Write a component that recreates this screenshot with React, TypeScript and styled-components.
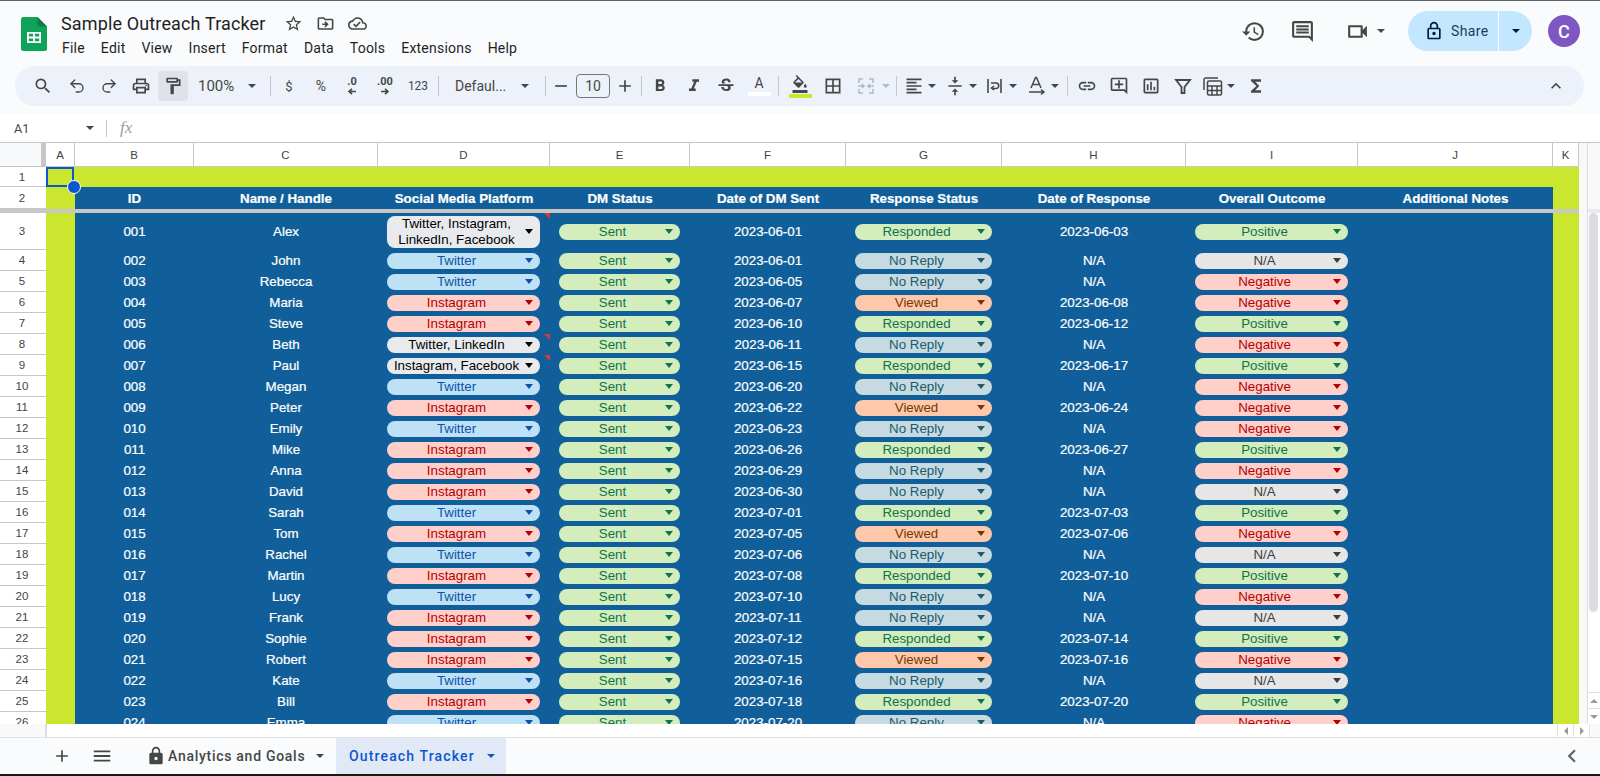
import React from "react";
import styled, { createGlobalStyle } from "styled-components";
import {
  MdSearch, MdOutlinePrint, MdOutlineFormatPaint, MdAdd, MdRemove, MdFormatBold, MdFormatItalic,
  MdStrikethroughS, MdFormatColorFill, MdBorderAll, MdFormatAlignLeft, MdVerticalAlignCenter, MdLink,
  MdOutlineAddComment, MdOutlineInsertChart, MdFunctions, MdExpandLess, MdHistory, MdOutlineComment,
  MdOutlineVideocam, MdOutlineLock, MdStarBorder, MdOutlineDriveFileMove, MdOutlineCloudDone, MdLock, MdMenu,
  MdChevronLeft,
} from "react-icons/md";
import { Undo2, Redo2 } from "lucide-react";

const Global = createGlobalStyle`
  html, body { margin: 0; padding: 0; background: #fff; overflow: hidden; }
  * { box-sizing: border-box; }
`;

const Page = styled.div`
  width: 1600px; height: 776px; display: flex; flex-direction: column; overflow: hidden;
  font-family: "Liberation Sans", Arial, sans-serif; border-top: 1px solid #5f6368; border-bottom: 2px solid #1a1a1a;
`;
const Header = styled.header`
  background: #f9fbfd; height: 113px; display: flex; flex-direction: column; flex: none;
`;
const TitleBar = styled.div`
  height: 65px; display: flex; align-items: flex-start; flex: none;
`;
const Logo = styled.svg`
  width: 26px; height: 34px; margin: 16px 0 0 21px; flex: none;
`;
const TitleBlock = styled.div`
  margin-left: 7px; display: flex; flex-direction: column;
`;
const TitleRow = styled.div`
  display: flex; align-items: center; height: 24px; margin-top: 10px; padding-left: 7px; color: #444746;
`;
const Title = styled.span`
  font: 400 18px Roboto, sans-serif; letter-spacing: 0.14px; color: #1f1f1f; width: 216px; white-space: nowrap;
`;
const TitleIcon = styled.span`
  width: 32px; display: flex; justify-content: center; font-size: 19px; color: #444746;
`;
const Menu = styled.nav`
  display: flex; margin-top: 1px;
`;
const MenuItem = styled.span`
  font: 400 14px Roboto, sans-serif; letter-spacing: 0.22px; color: #1f1f1f; padding: 0 8px; height: 24px; line-height: 24px;
`;
const Right = styled.div`
  margin-left: auto; display: flex; align-items: center; height: 40px; margin-top: 10px; color: #444746;
`;
const RightIcon = styled.span<{ $w: number; $ml?: number }>`
  width: ${(p) => p.$w}px; margin-left: ${(p) => p.$ml ?? 0}px; display: flex; justify-content: center; font-size: 25px;
`;
const ShareButton = styled.div`
  width: 124px; height: 40px; border-radius: 20px; background: #c2e7ff; display: flex; align-items: center; margin-left: 23px;
  color: #001d35;
`;
const ShareMain = styled.div`
  width: 91px; height: 40px; display: flex; align-items: center; padding-left: 16px; gap: 7px;
  font: 400 14px Roboto, sans-serif; letter-spacing: 0.35px; border-right: 1px solid #fff; color: #1f3a52;
  svg { font-size: 20px; color: #001d35; }
`;
const ShareCaretBox = styled.div`
  flex: 1; display: flex; justify-content: center;
`;
const Avatar = styled.div`
  width: 32px; height: 32px; border-radius: 50%; background: #7e57c2; color: #fff; margin: 0 20px 0 16px;
  font: 500 18px Roboto, sans-serif; display: flex; align-items: center; justify-content: center;
`;
const Toolbar = styled.div`
  margin: 0 16px 0 15px; height: 40px; border-radius: 20px; background: #edf2fa; display: flex; align-items: center; padding: 0 8px 0 12px;
  color: #444746; flex: none;
`;
const Tool = styled.span<{ $w: number; $ml?: number; $active?: boolean; $size?: number }>`
  width: ${(p) => p.$w}px; margin-left: ${(p) => p.$ml ?? 0}px; height: 30px; display: flex; align-items: center; justify-content: center;
  font-size: ${(p) => p.$size ?? 20}px; flex: none; border-radius: 4px;
  background: ${(p) => (p.$active ? "#dfe3e9" : "transparent")};
  color: #444746;
`;
const Sep = styled.span<{ $ml: number; $mr?: number }>`
  width: 1px; height: 20px; background: #c7c7c7; flex: none; margin-left: ${(p) => p.$ml}px; margin-right: ${(p) => p.$mr ?? 0}px;
`;
const Caret = styled.span<{ $color?: string }>`
  width: 0; height: 0; flex: none; border-left: 4px solid transparent; border-right: 4px solid transparent;
  border-top: 4px solid ${(p) => p.$color ?? "#444746"};
`;
const ChipCaret = styled(Caret)`
  border-top-width: 5px;
`;
const ToolText = styled.span<{ $w: number; $ml?: number; $size?: number; $pad?: number }>`
  width: ${(p) => p.$w}px; margin-left: ${(p) => p.$ml ?? 0}px; padding-left: ${(p) => p.$pad ?? 0}px; display: flex; align-items: center; justify-content: ${(p) => (p.$pad !== undefined ? "flex-start" : "center")};
  font: 400 ${(p) => p.$size ?? 14}px Roboto, sans-serif; color: #444746; flex: none; height: 30px;
`;
const CaretPush = styled.span<{ $ml: number }>`
  margin-left: ${(p) => p.$ml}px; display: flex;
`;
const Decimal = styled.span`
  width: 100%; display: flex; flex-direction: column; align-items: center; font: 700 11px/10px Roboto, sans-serif; color: #444746;
  svg { display: block; margin-top: 1px; }
`;
const SizeBox = styled.span`
  width: 34px; height: 24px; border: 1px solid #747775; border-radius: 4px; flex: none; display: flex; align-items: center; justify-content: center;
  font: 400 14px Roboto, sans-serif; color: #444746;
`;
const ColorTool = styled.span<{ $c: string; $bw: number }>`
  display: flex; flex-direction: column; align-items: center; font: 400 14px/15px Roboto, sans-serif;
  i { display: block; width: ${(p) => p.$bw}px; height: 4px; background: ${(p) => p.$c}; margin-top: 1px; }
  svg { display: block; }
`;
const Formula = styled.div`
  height: 29px; display: flex; align-items: center; background: #fff; flex: none; padding-left: 14px; border-bottom: 1px solid #c7c7c7;
`;
const NameBox = styled.span`
  width: 72px; font: 400 12.5px Roboto, sans-serif; color: #444746;
`;
const FxIcon = styled.span`
  margin-left: 13px; font: italic 400 17px "Liberation Serif", serif; color: #9aa0a6;
`;
const VSep = styled.span`
  width: 1px; height: 17px; background: #c7c7c7; margin-left: 12px;
`;
const SheetWrap = styled.div`
  flex: 1; min-height: 0; display: flex; overflow: hidden;
`;
const Sheet = styled.div`
  width: 1579px; flex: none; overflow: hidden; position: relative;
`;
const COLS = "46px 29px 119px 184px 172px 140px 156px 156px 184px 172px 195px 26px";
const Row = styled.div<{ $h: number; $freeze?: boolean }>`
  display: grid; grid-template-columns: ${COLS}; height: ${(p) => p.$h}px;
  ${(p) => (p.$freeze ? "border-bottom: 4px solid #c7c7c7;" : "")}
`;
const ColHeadRow = styled(Row)`
  border-bottom: 1px solid #c7c7c7;
`;
const Corner = styled.div`
  background: #f8f9fa; border-right: 5px solid #c7c7c7;
`;
const ColHead = styled.div`
  background: #fff; border-right: 1px solid #c7c7c7; display: flex; align-items: center; justify-content: center;
  font: 400 11.5px "Liberation Sans", Arial, sans-serif; color: #444;
`;
const RowHead = styled.div`
  background: #fff; display: flex; align-items: center; justify-content: center; padding-right: 2px; border-bottom: 1px solid #c7c7c7;
  font: 400 11.5px "Liberation Sans", Arial, sans-serif; color: #444; overflow: hidden;
`;
const Lime = styled.div`
  background: #cbe62e; position: relative;
`;
const LimeFull = styled.div`
  background: #cbe62e; grid-column: 3 / 13;
`;
const Selected = styled.span`
  position: absolute; inset: 0 1px 0 0; border: 2px solid #0b57d0; z-index: 3;
  &::after { content: ""; position: absolute; right: -9px; bottom: -9px; width: 12px; height: 12px; border-radius: 50%; background: #0b57d0; border: 1.5px solid #fff; }
`;
const Cell = styled.div<{ $bold?: boolean }>`
  background: #115f9a; color: #fff; position: relative; display: flex; align-items: center; justify-content: center;
  font: ${(p) => (p.$bold ? 700 : 400)} 13.33px "Liberation Sans", Arial, sans-serif; white-space: nowrap;
  -webkit-text-stroke: 0.2px #fff;
`;
const Note = styled.span`
  position: absolute; top: 0; right: 0; width: 0; height: 0; border-top: 6px solid #db3a34; border-left: 6px solid transparent;
`;
const Chip = styled.div<{ $w: number; $bg: string; $fg: string; $tall?: boolean }>`
  width: ${(p) => p.$w}px; height: ${(p) => (p.$tall ? 32 : 16)}px; border-radius: 8px; background: ${(p) => p.$bg}; color: ${(p) => p.$fg};
  display: flex; align-items: center; margin-left: -1px; padding-right: 7px; font-size: 13.33px; line-height: 16px; flex: none;
  overflow: hidden; -webkit-text-stroke: 0;
`;
const ChipText = styled.span`
  flex: 1; text-align: center; white-space: pre; padding-left: 1px;
`;
const Gutter = styled.div`
  width: 9px; flex: none; background: #f8f9f7; border-right: 1px solid #dadce0;
`;
const VBar = styled.div`
  flex: 1; background: #fff; display: flex; flex-direction: column; position: relative;
`;
const VBarHead = styled.div`
  height: 70px; background: #f8f9fa; border-bottom: 4px solid #e8eaed; flex: none;
`;
const Thumb = styled.div`
  width: 9px; height: 399px; margin-left: 1px; background: #dadce0; border-radius: 5px; flex: none;
`;
const VArrows = styled.div`
  margin-top: auto; flex: none;
`;
const Arrow = styled.div`
  height: 16px; display: flex; align-items: center; justify-content: center; border-top: 1px solid #e0e0e0; background: #fff;
`;
const Tri = styled.span<{ $dir: "up" | "down" | "left" | "right" }>`
  width: 0; height: 0;
  ${(p) => {
    const c = "4px solid #9a9a9a";
    const t = "4px solid transparent";
    if (p.$dir === "up") return `border-left:${t};border-right:${t};border-bottom:${c};`;
    if (p.$dir === "down") return `border-left:${t};border-right:${t};border-top:${c};`;
    if (p.$dir === "left") return `border-top:${t};border-bottom:${t};border-right:${c};`;
    return `border-top:${t};border-bottom:${t};border-left:${c};`;
  }}
`;
const HStrip = styled.div`
  height: 14px; flex: none; display: flex; background: #fff; border-bottom: 1px solid #e0e0e0;
`;
const HLeft = styled.div`
  width: 47px; background: #f8f9fa; border-right: 2px solid #dadce0;
`;
const HArrow = styled.div`
  width: 16px; display: flex; align-items: center; justify-content: center; border-left: 1px solid #e0e0e0;
`;
const HEnd = styled.div`
  width: 11px; background: #f8f9fa; border-left: 1px solid #e0e0e0;
`;
const HFill = styled.div`
  flex: 1;
`;
const Tabs = styled.div`
  height: 36px; flex: none; background: #f9fbfd; display: flex; align-items: center; color: #444746;
`;
const TabIcon = styled.span<{ $w: number; $ml: number; $size?: number }>`
  width: ${(p) => p.$w}px; margin-left: ${(p) => p.$ml}px; display: flex; justify-content: center; font-size: ${(p) => p.$size ?? 22}px;
`;
const Tab = styled.div<{ $active?: boolean; $w: number; $ml: number }>`
  width: ${(p) => p.$w}px; margin-left: ${(p) => p.$ml}px; height: 100%; display: flex; align-items: center;
  background: ${(p) => (p.$active ? "#e1e9f7" : "transparent")};
  padding-left: ${(p) => (p.$active ? 13 : 0)}px;
`;
const TabLabel = styled.span<{ $active?: boolean }>`
  font: 500 14px Roboto, sans-serif; letter-spacing: ${(p) => (p.$active ? 1.15 : 0.72)}px; color: ${(p) => (p.$active ? "#0b57d0" : "#444746")}; white-space: nowrap;
`;
const TabChevron = styled.span`
  margin-left: auto; margin-right: 15px; display: flex; font-size: 26px; color: #5f6368;
`;

type Style = { bg: string; fg: string };
const S: Record<string, Style> = {
  Twitter: { bg: "#bfe1f6", fg: "#0a53a8" },
  Instagram: { bg: "#ffcfc9", fg: "#b10202" },
  Sent: { bg: "#d4edbc", fg: "#11734b" },
  Responded: { bg: "#d4edbc", fg: "#11734b" },
  Positive: { bg: "#d4edbc", fg: "#11734b" },
  "No Reply": { bg: "#c6dbe1", fg: "#215a6c" },
  Viewed: { bg: "#ffc8aa", fg: "#753800" },
  Negative: { bg: "#ffcfc9", fg: "#b10202" },
  "N/A": { bg: "#e6e6e6", fg: "#3d3d3d" },
};
const MULTI: Style = { bg: "#e8eaed", fg: "#000" };

const raw = `001|Alex|Twitter, Instagram,\nLinkedIn, Facebook|06-01|Responded|06-03|Positive
002|John|Twitter|06-01|No Reply||N/A
003|Rebecca|Twitter|06-05|No Reply||Negative
004|Maria|Instagram|06-07|Viewed|06-08|Negative
005|Steve|Instagram|06-10|Responded|06-12|Positive
006|Beth|Twitter, LinkedIn|06-11|No Reply||Negative
007|Paul|Instagram, Facebook|06-15|Responded|06-17|Positive
008|Megan|Twitter|06-20|No Reply||Negative
009|Peter|Instagram|06-22|Viewed|06-24|Negative
010|Emily|Twitter|06-23|No Reply||Negative
011|Mike|Instagram|06-26|Responded|06-27|Positive
012|Anna|Instagram|06-29|No Reply||Negative
013|David|Instagram|06-30|No Reply||N/A
014|Sarah|Twitter|07-01|Responded|07-03|Positive
015|Tom|Instagram|07-05|Viewed|07-06|Negative
016|Rachel|Twitter|07-06|No Reply||N/A
017|Martin|Instagram|07-08|Responded|07-10|Positive
018|Lucy|Twitter|07-10|No Reply||Negative
019|Frank|Instagram|07-11|No Reply||N/A
020|Sophie|Instagram|07-12|Responded|07-14|Positive
021|Robert|Instagram|07-15|Viewed|07-16|Negative
022|Kate|Twitter|07-16|No Reply||N/A
023|Bill|Instagram|07-18|Responded|07-20|Positive
024|Emma|Twitter|07-20|No Reply||Negative`;
const rows = raw.split("\n").reduce<string[]>((acc, line) => {
  if (/^\d{3}\|/.test(line)) acc.push(line);
  else acc[acc.length - 1] += "\n" + line;
  return acc;
}, []).map((l) => l.split("|"));

const Dropdown = ({ w, value, tall }: { w: number; value: string; tall?: boolean }) => {
  const st = S[value] ?? MULTI;
  return (
    <Chip $w={w} $bg={st.bg} $fg={st.fg} $tall={tall}>
      <ChipText>{value}</ChipText>
      <ChipCaret $color={st === MULTI ? "#000" : st.fg} />
    </Chip>
  );
};

const ArrowGlyph = ({ dir }: { dir: "l" | "r" }) => (
  <svg width="14" height="7" viewBox="0 0 14 7">
    {dir === "l" ? <path d="M4 3.5h7M7 .8 4 3.5 7 6.2" stroke="#444746" strokeWidth="1.6" fill="none" /> : <path d="M3 3.5h7M7 .8l3 2.7L7 6.2" stroke="#444746" strokeWidth="1.6" fill="none" />}
  </svg>
);

const MergeIcon = () => (
  <svg width="18" height="18" viewBox="0 0 18 18" fill="none" stroke="#b6bac0" strokeWidth="1.6">
    <path d="M6 2H2v4M12 2h4v4M6 16H2v-4M12 16h4v-4M1 9h6M5 7l2 2-2 2M17 9h-6M13 7l-2 2 2 2" />
  </svg>
);
const WrapIcon = () => (
  <svg width="18" height="18" viewBox="0 0 18 18" fill="none" stroke="#444746" strokeWidth="1.6">
    <path d="M2 2v14M15 2v14M5 6h5a2.6 2.6 0 0 1 0 5.500H6M8 9l-2.500 2L8 13" />
  </svg>
);
const RotateIcon = () => (
  <svg width="18" height="20" viewBox="0 0 18 20" fill="none" stroke="#444746" strokeWidth="1.5">
    <path d="M3 12 7.500 1.500h1L13 12M4.500 8.500h7M1 16h14M13 13.500l3 2.500-3 2.500" />
  </svg>
);
const TableIcon = () => (
  <svg width="20" height="20" viewBox="0 0 20 20" fill="none" stroke="#444746" strokeWidth="1.5">
    <path d="M15 2H2.800A1.800 1.800 0 0 0 1 3.800V14" />
    <rect x="4.500" y="5" width="14" height="14" rx="1.500" />
    <path d="M4.500 10h14M4.500 14.500h14M9 10v9M14 10v9" />
  </svg>
);
const FunnelIcon = () => (
  <svg width="18" height="18" viewBox="0 0 18 18" fill="none" stroke="#444746" strokeWidth="1.8">
    <path d="M2 3h14l-5.500 7v6h-3v-6z" />
  </svg>
);

export default function App() {
  const colLetters = "ABCDEFGHIJK".split("");
  const heads = ["ID", "Name / Handle", "Social Media Platform", "DM Status", "Date of DM Sent", "Response Status", "Date of Response", "Overall Outcome", "Additional Notes"];
  return (
    <Page>
      <Global />
      <Header>
        <TitleBar>
          <Logo viewBox="0 0 26 34">
            <path d="M16.500 0H2.500A2.500 2.500 0 0 0 0 2.500v29A2.500 2.500 0 0 0 2.500 34h21a2.500 2.500 0 0 0 2.500-2.500V9.500z" fill="#0fa35a" />
            <path d="M16.500 0v7a2.500 2.500 0 0 0 2.500 2.500h7z" fill="#0b7d43" />
            <path d="M6 15h14v11H6z" fill="#fff" />
            <path d="M7.800 16.700h4.300v2.900H7.800zM13.900 16.700h4.300v2.900h-4.300zM7.800 21.400h4.300v2.900H7.800zM13.900 21.400h4.300v2.900h-4.300z" fill="#0fa35a" />
          </Logo>
          <TitleBlock>
            <TitleRow>
              <Title>Sample Outreach Tracker</Title>
              <TitleIcon><MdStarBorder /></TitleIcon>
              <TitleIcon><MdOutlineDriveFileMove /></TitleIcon>
              <TitleIcon><MdOutlineCloudDone /></TitleIcon>
            </TitleRow>
            <Menu>
              {["File", "Edit", "View", "Insert", "Format", "Data", "Tools", "Extensions", "Help"].map((m) => <MenuItem key={m}>{m}</MenuItem>)}
            </Menu>
          </TitleBlock>
          <Right>
            <RightIcon $w={50}><MdHistory /></RightIcon>
            <RightIcon $w={48}><MdOutlineComment /></RightIcon>
            <RightIcon $w={46} $ml={8}><MdOutlineVideocam /></RightIcon>
            <CaretPush $ml={-3}><Caret /></CaretPush>
            <ShareButton>
              <ShareMain><MdOutlineLock /><span>Share</span></ShareMain>
              <ShareCaretBox><Caret $color="#001d35" /></ShareCaretBox>
            </ShareButton>
            <Avatar>C</Avatar>
          </Right>
        </TitleBar>
        <Toolbar>
          <Tool $w={32}><MdSearch /></Tool>
          <Tool $w={36}><Undo2 size={18} strokeWidth={1.8} /></Tool>
          <Tool $w={28}><Redo2 size={18} strokeWidth={1.8} /></Tool>
          <Tool $w={35}><MdOutlinePrint /></Tool>
          <Tool $w={30} $active><MdOutlineFormatPaint /></Tool>
          <ToolText $w={54} $pad={10} $size={15}>100%</ToolText>
          <CaretPush $ml={6}><Caret /></CaretPush>
          <Sep $ml={14} $mr={2} />
          <ToolText $w={32} $size={13}>$</ToolText>
          <ToolText $w={32} $size={14}>%</ToolText>
          <Tool $w={30}><Decimal>.0<ArrowGlyph dir="l" /></Decimal></Tool>
          <Tool $w={36}><Decimal>.00<ArrowGlyph dir="r" /></Decimal></Tool>
          <ToolText $w={30} $size={12}>123</ToolText>
          <Sep $ml={5} $mr={2} />
          <ToolText $w={64} $pad={14} $size={14}>Defaul...</ToolText>
          <CaretPush $ml={16}><Caret /></CaretPush>
          <Sep $ml={16} />
          <Tool $w={30}><MdRemove /></Tool>
          <SizeBox>10</SizeBox>
          <Tool $w={30}><MdAdd /></Tool>
          <Sep $ml={1} />
          <Tool $w={36}><MdFormatBold /></Tool>
          <Tool $w={32}><MdFormatItalic /></Tool>
          <Tool $w={32}><MdStrikethroughS /></Tool>
          <Tool $w={32} $ml={1}><ColorTool $c="#fff" $bw={23}>A<i /></ColorTool></Tool>
          <Sep $ml={3} />
          <Tool $w={42}><ColorTool $c="#cbe62e" $bw={23}><MdFormatColorFill size={18} /><i /></ColorTool></Tool>
          <Tool $w={24}><MdBorderAll /></Tool>
          <Tool $w={28} $ml={7}><MergeIcon /></Tool>
          <CaretPush $ml={2}><Caret $color="#b6bac0" /></CaretPush>
          <Sep $ml={6} />
          <Tool $w={28} $ml={3}><MdFormatAlignLeft /></Tool>
          <Caret />
          <Tool $w={28} $ml={5}><MdVerticalAlignCenter /></Tool>
          <Caret />
          <Tool $w={28} $ml={4}><WrapIcon /></Tool>
          <Caret />
          <Tool $w={28} $ml={6}><RotateIcon /></Tool>
          <Caret />
          <Sep $ml={8} />
          <Tool $w={38}><MdLink /></Tool>
          <Tool $w={26}><MdOutlineAddComment /></Tool>
          <Tool $w={38}><MdOutlineInsertChart /></Tool>
          <Tool $w={26}><FunnelIcon /></Tool>
          <Tool $w={28} $ml={3}><TableIcon /></Tool>
          <Caret />
          <Tool $w={28} $ml={7}><MdFunctions /></Tool>
          <Tool $w={40} $ml={266}><MdExpandLess /></Tool>
        </Toolbar>
      </Header>
      <Formula>
        <NameBox>A1</NameBox>
        <Caret />
        <VSep />
        <FxIcon>fx</FxIcon>
      </Formula>
      <SheetWrap>
        <Sheet>
          <ColHeadRow $h={24}>
            <Corner />
            {colLetters.map((c) => <ColHead key={c}>{c}</ColHead>)}
          </ColHeadRow>
          <Row $h={20}>
            <RowHead>1</RowHead>
            <Lime><Selected /></Lime>
            <LimeFull />
          </Row>
          <Row $h={26} $freeze>
            <RowHead>2</RowHead>
            <Lime />
            {heads.map((h) => <Cell key={h} $bold>{h}</Cell>)}
            <Lime />
          </Row>
          {rows.map((r, i) => {
            const [id, name, platform, date, response, respDate, outcome] = r;
            const tall = i === 0;
            const noted = !S[platform];
            return (
              <Row key={id} $h={tall ? 37 : 21}>
                <RowHead>{i + 3}</RowHead>
                <Lime />
                <Cell>{id}</Cell>
                <Cell>{name}</Cell>
                <Cell>
                  <Dropdown w={153} value={platform} tall={tall} />
                  {noted && <Note />}
                </Cell>
                <Cell><Dropdown w={121} value="Sent" /></Cell>
                <Cell>2023-{date}</Cell>
                <Cell><Dropdown w={137} value={response} /></Cell>
                <Cell>{respDate ? `2023-${respDate}` : "N/A"}</Cell>
                <Cell><Dropdown w={153} value={outcome} /></Cell>
                <Cell />
                <Lime />
              </Row>
            );
          })}
        </Sheet>
        <Gutter />
        <VBar>
          <VBarHead />
          <Thumb />
          <VArrows>
            <Arrow><Tri $dir="up" /></Arrow>
            <Arrow><Tri $dir="down" /></Arrow>
          </VArrows>
        </VBar>
      </SheetWrap>
      <HStrip>
        <HLeft />
        <HFill />
        <HArrow><Tri $dir="left" /></HArrow>
        <HArrow><Tri $dir="right" /></HArrow>
        <HEnd />
      </HStrip>
      <Tabs>
        <TabIcon $w={24} $ml={50} $size={20}><MdAdd /></TabIcon>
        <TabIcon $w={24} $ml={16}><MdMenu /></TabIcon>
        <TabIcon $w={20} $ml={32}><MdLock /></TabIcon>
        <Tab $w={170} $ml={2}>
          <TabLabel>Analytics and Goals</TabLabel>
          <CaretPush $ml={11}><Caret /></CaretPush>
        </Tab>
        <Tab $active $w={170} $ml={-2}>
          <TabLabel $active>Outreach Tracker</TabLabel>
          <CaretPush $ml={12}><Caret $color="#0b57d0" /></CaretPush>
        </Tab>
        <TabChevron><MdChevronLeft /></TabChevron>
      </Tabs>
    </Page>
  );
}
